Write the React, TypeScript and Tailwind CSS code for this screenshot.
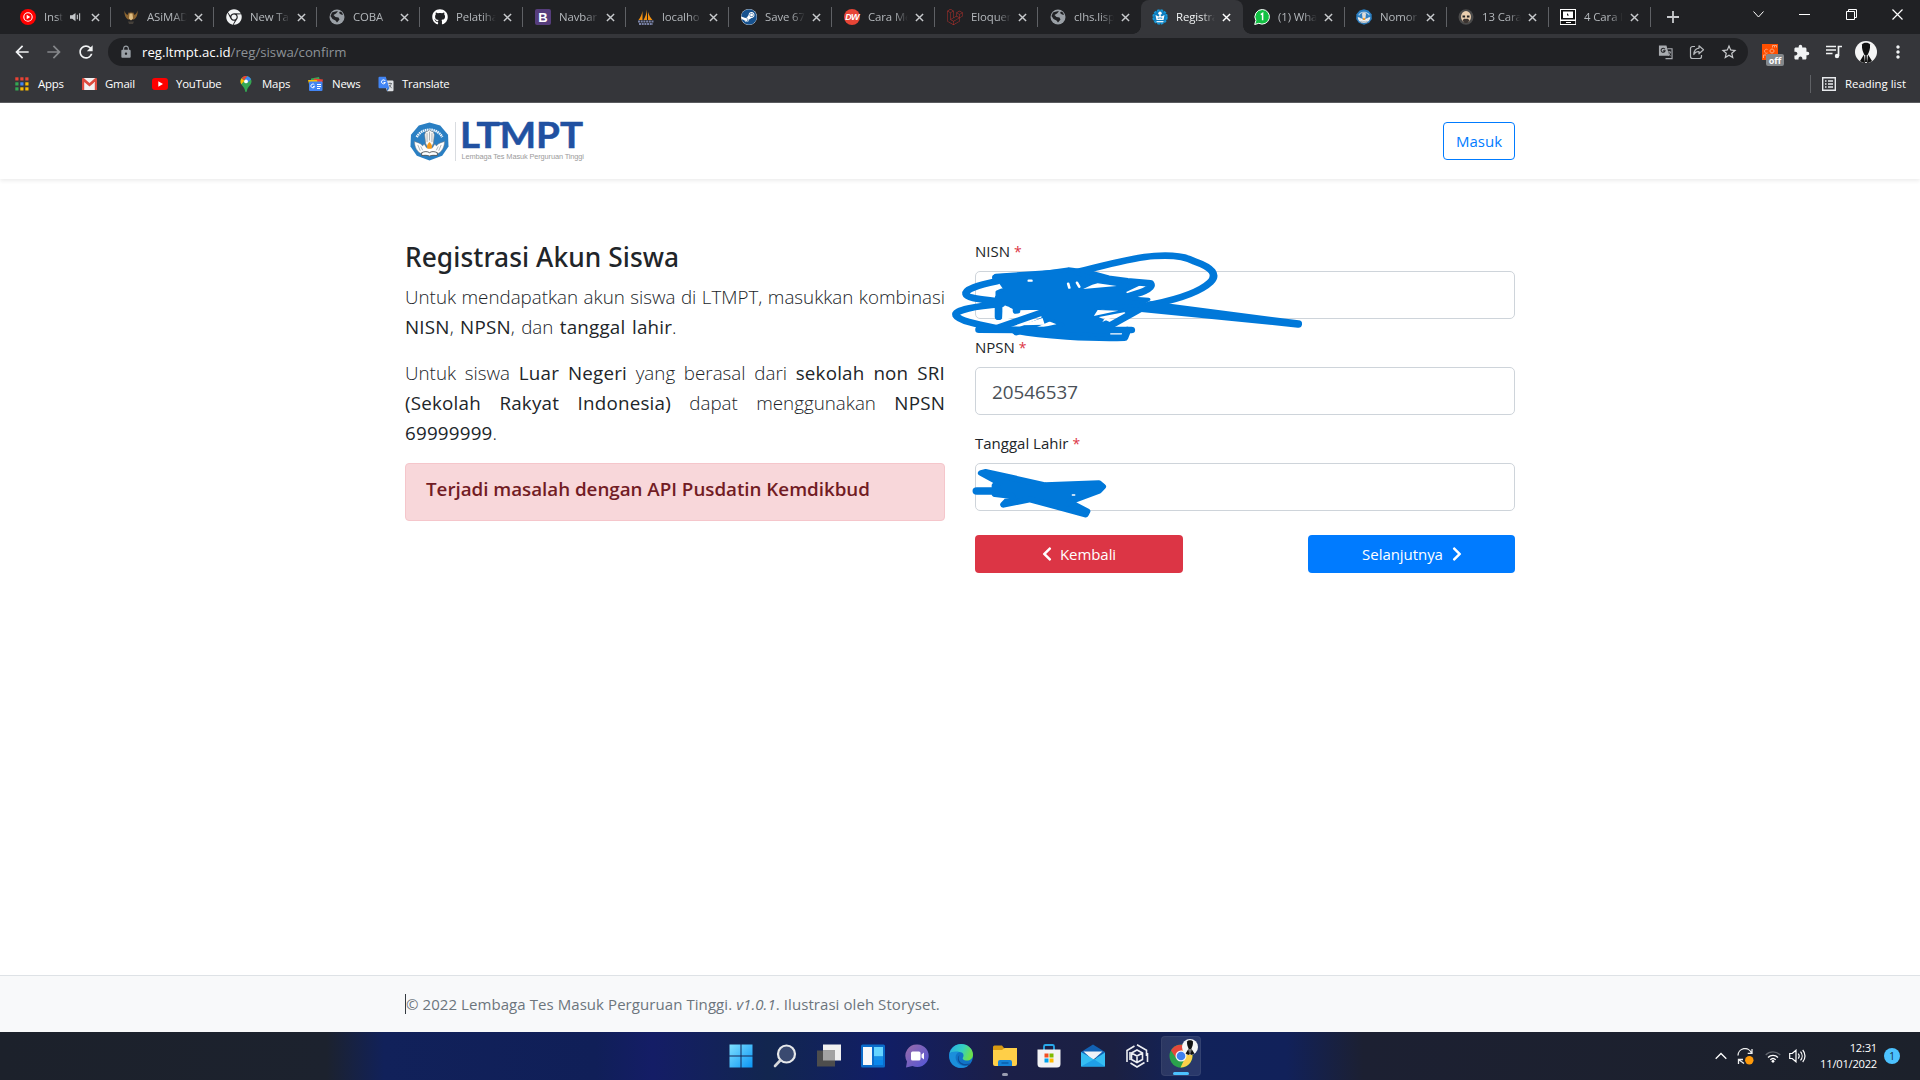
import React from "react";
import { FaChevronLeft, FaChevronRight, FaGithub, FaSteam, FaLaravel, FaChrome } from "react-icons/fa";
import { MdArrowBack, MdArrowForward, MdRefresh, MdLock, MdExtension, MdMoreVert, MdStarBorder } from "react-icons/md";

const BLUE = "#0078d9";

/* ---------- favicons ---------- */

const YtMusic = () => (
  <svg viewBox="0 0 16 16" className="size-4">
    <circle cx="8" cy="8" r="8" fill="#f00" />
    <circle cx="8" cy="8" r="4.2" fill="none" stroke="#fff" strokeWidth="1.1" />
    <path d="M6.7 5.8 10.3 8l-3.6 2.2z" fill="#fff" />
  </svg>
);

const Garuda = () => (
  <svg viewBox="0 0 16 16" className="size-4">
    <path d="M1.500 1.500c.500 2 1.500 3.500 3 4.500L6 3l1 1.500L8 2.500l1 2L10 3l1.500 3c1.500-1 2.500-2.500 3-4.500.500 4-1 7.500-3.500 9H5C2.500 9 1 5.500 1.500 1.500z" fill="#8a6330" />
    <path d="M6.500 4.500h3l.500 5-2 2-2-2z" fill="#e0bd80" />
    <path d="M5 12.500h6l-1 2.500H6z" fill="#45403a" />
  </svg>
);

const Globe = () => (
  <svg viewBox="0 0 16 16" className="size-4">
    <circle cx="8" cy="8" r="7.500" fill="#9aa0a6" />
    <path d="M3 3.500C5 2.500 7 1.800 9 2.300L7 4.500 4.500 6l2 2 3 .500 1 2-2.500 3-1.500-2-3-1.500L1.500 7zM10 4l2 1.500 2 .5-1-2.500L11 2.500z" fill="#202124" />
  </svg>
);

const ChromeGrey = () => <FaChrome className="size-4 text-[#f1f3f4]" />;
const GithubMark = () => <FaGithub className="size-4 text-white" />;

const Bootstrap = () => (
  <span className="flex size-4 items-center justify-center rounded-[2px] bg-[#563d7c] font-['Liberation_Sans'] text-[13px] leading-none font-bold text-white">B</span>
);

const PhpMyAdmin = () => (
  <svg viewBox="0 0 16 16" className="size-4">
    <path d="M4.500 2v9H.500C2.500 8.500 4 5 4.500 2zM9 .500V11H5.500C7.500 8 8.500 4 9 .500zM10 3c1 3 2.500 6 4.500 8H10z" fill="#f29111" />
    <path d="M0 12.500h16M1 15h14" stroke="#7a83a8" strokeWidth="1.800" strokeDasharray="2 .7" />
  </svg>
);

const Steam = () => (
  <span className="flex size-4 items-center justify-center rounded-full bg-white">
    <FaSteam className="size-4 text-[#17528f]" />
  </span>
);

const Dw = () => (
  <span className="flex size-4 items-center justify-center rounded-full bg-[#e74536] font-['Liberation_Sans'] text-[9px] leading-none font-bold tracking-[-0.8px] text-white italic">DW</span>
);

const Laravel = () => <FaLaravel className="size-4 text-[#b5302b]" />;

const TutWuri = ({ className = "size-4" }: { className?: string }) => (
  <svg viewBox="0 0 40 40" className={className}>
    <path d="M20 .500 31 3.500l8 9.500.500 12-6.500 9.500L20 39.500 7 34.500.500 25 1 13 9 3.500z" fill="#2a7fc3" />
    <path d="M7 15.500A14 12 0 0 1 33 15.500" fill="none" stroke="#eef5fb" strokeWidth="2.600" strokeDasharray="1.600 .6" />
    <path d="M4.500 20c3 1 6 1.500 8.500 4.500l1.500-2 2.500 4h6l2.500-4 1.500 2c2.500-3 5.500-3.500 8.500-4.500-.200 5-2 9.500-6 12H10.500c-4-2.500-5.800-7-6-12z" fill="#fff" stroke="#70757a" strokeWidth=".5" />
    <path d="M15 13l1-3 2-.5 2-1.500 2 1.500 2 .500 1 3-1 9-2 4h-4l-2-4z" fill="#f6f6f4" stroke="#70757a" strokeWidth=".6" />
    <path d="M17.500 11.500v9M20 10v9M22.500 11.500v9M11 25l2 4M29 25l-2 4M8 23.500l2.500 6M32 23.500l-2.500 6" stroke="#8f959a" strokeWidth=".7" />
    <path d="M20 20.500c3 3 3 5 2 7h-4c-1-2-1-4 2-7z" fill="#f59a1b" />
    <path d="M12 31.500c3-1.500 6-1.500 8 0 2-1.500 5-1.500 8 0v3c-3-.500-6-.500-8 .5-2-1-5-1-8-.5z" fill="#fff" stroke="#4c5054" strokeWidth=".9" />
  </svg>
);

const LtmptIcon = () => (
  <svg viewBox="0 0 16 16" className="size-4">
    <circle cx="8" cy="8" r="6.800" fill="#0e7dbf" stroke="#1596d6" strokeWidth="1.800" strokeDasharray="2.600 1" />
    <circle cx="8" cy="4.200" r="1.700" fill="#fff" />
    <path d="M3.500 6l3 1.500L8 5.500l1.500 2 3-1.500-1 5h-7z" fill="#fff" />
    <path d="M4.500 12.700h7" stroke="#fff" strokeWidth="1.200" />
    <path d="M6.300 8.500v1.500M9.700 8.500v1.500M8 8v2" stroke="#0e7dbf" strokeWidth=".8" />
  </svg>
);

const WhatsApp = () => (
  <svg viewBox="0 0 16 16" className="size-4">
    <path d="M8.300.5a7.300 7.300 0 1 1-3.500 13.800L.700 15.500 1.900 11.500A7.300 7.300 0 0 1 8.300.5z" fill="#12c143" stroke="#fff" strokeWidth="1" />
    <path d="M6.800 5.700 8.600 4.500V11.300" fill="none" stroke="#fff" strokeWidth="1.500" />
  </svg>
);

const Face = () => (
  <svg viewBox="0 0 16 16" className="size-4">
    <ellipse cx="8" cy="8" rx="7.500" ry="7.800" fill="#4a4a4a" />
    <ellipse cx="8" cy="7.800" rx="5" ry="5.800" fill="#ecd0b0" />
    <path d="M4.500 7.500h2.600M8.900 7.500h2.600" stroke="#222" strokeWidth="1.800" />
    <path d="M4.500 11.500c1-2 2.500-2 3.500-1.500 1-.500 2.500-.500 3.500 1.500l-2 2.500h-3z" fill="#3a3330" />
  </svg>
);

const Computer = () => (
  <svg viewBox="0 0 16 16" className="size-4">
    <path d="M0 0h16v16H0z" fill="#fff" />
    <path d="M1 1h14v9.500H1z" fill="#111" />
    <path d="M3 2.500h10v6.500H3z" fill="#fff" />
    <path d="M7 4v2.500h2z" fill="#111" />
    <path d="M.700 12h14.600v3H.700z" fill="#111" />
    <path d="M6 13h5v1H6z" fill="#fff" />
  </svg>
);

type TabData = { icon: () => React.ReactElement; title: string; audio?: boolean };

const tabsBefore: TabData[] = [
  { icon: YtMusic, title: "Insta", audio: true },
  { icon: Garuda, title: "ASiMAD" },
  { icon: ChromeGrey, title: "New Tab" },
  { icon: Globe, title: "COBA" },
  { icon: GithubMark, title: "Pelatiha" },
  { icon: Bootstrap, title: "Navbar" },
  { icon: PhpMyAdmin, title: "localho" },
  { icon: Steam, title: "Save 67" },
  { icon: Dw, title: "Cara Me" },
  { icon: Laravel, title: "Eloquen" },
  { icon: Globe, title: "clhs.lisp" },
];
const tabsAfter: TabData[] = [
  { icon: WhatsApp, title: "(1) Wha" },
  { icon: () => <TutWuri />, title: "Nomor" },
  { icon: Face, title: "13 Cara" },
  { icon: Computer, title: "4 Cara l" },
];

const Cross = ({ className }: { className: string }) => (
  <svg viewBox="0 0 10 10" className={className}>
    <path d="M1 1l8 8M9 1 1 9" stroke="currentColor" strokeWidth="1.600" />
  </svg>
);

function Tab({ icon: Icon, title, audio, active, sep = true, narrow }: TabData & { active?: boolean; sep?: boolean; narrow?: boolean }) {
  return (
    <div className={`relative flex h-[34px] shrink-0 items-center ${narrow ? "w-[102px] pl-[11px]" : "w-[103px] pl-3"} ${active ? "rounded-t-lg bg-[#35363a] text-[#f1f3f4]" : "text-[#b4b8bc]"}`}>
      {active && (
        <>
          <span className="absolute bottom-0 -left-2 size-2 bg-[radial-gradient(circle_at_0_0,#202124_7.5px,#35363a_8px)]" />
          <span className="absolute -right-2 bottom-0 size-2 bg-[radial-gradient(circle_at_100%_0,#202124_7.5px,#35363a_8px)]" />
        </>
      )}
      <span className="flex size-4 shrink-0 items-center justify-center"><Icon /></span>
      <span className={`ml-2 overflow-hidden text-[11.4px] tracking-[-0.1px] whitespace-nowrap ${audio ? "w-[19px]" : narrow ? "w-[39px]" : "w-[40px]"} [mask-image:linear-gradient(to_right,#000_65%,transparent)]`}>{title}</span>
      {audio && (
        <svg viewBox="0 0 12 10" className="mr-[10px] ml-[7px] h-[10px] w-[11px] shrink-0">
          <path d="M0 3h2.500L6 .5v9L2.500 7H0z" fill="#c4c7ca" />
          <path d="M8 2.500v5M10.500 1v8" stroke="#c4c7ca" strokeWidth="1.200" />
        </svg>
      )}
      <Cross className={`size-[9px] shrink-0 ${audio ? "ml-0" : "ml-[7px]"} ${active ? "text-white" : "text-[#c8cacd]"}`} />
      {sep && <span className="absolute top-[7px] right-0 h-5 w-px bg-[#5f6165]" />}
    </div>
  );
}

/* ---------- browser chrome ---------- */

const GTranslateMono = () => (
  <svg viewBox="0 0 16 16" className="h-4 w-[15px] text-[#a8abaf]">
    <path d="M1 1h8l3 11H1z" fill="currentColor" />
    <path d="M10 4.500h5v10.500H8" fill="none" stroke="currentColor" strokeWidth="1.200" />
    <path d="M7.400 5A2.200 2.200 0 1 0 7.600 6.800H5.500" fill="none" stroke="#202124" strokeWidth="1.100" />
    <path d="M10.500 8h3.500M12 7v1M13.300 8c-.5 2-1.500 3-2.500 4M11 9.500l2.500 3" fill="none" stroke="currentColor" strokeWidth=".9" />
  </svg>
);

const GoogleTranslate = () => (
  <svg viewBox="0 0 16 16" className="size-4">
    <path d="M6 4.500h8.500a1 1 0 0 1 1 1V14a1.200 1.200 0 0 1-1.200 1.300H9z" fill="#dfe1e4" />
    <path d="M1.500.700h6.300l3.500 11.500H1.500A1 1 0 0 1 .500 11.200V1.700a1 1 0 0 1 1-1z" fill="#4285f4" />
    <path d="M7.300 5A2 2 0 1 0 7.400 6.500H5.600" fill="none" stroke="#fff" strokeWidth="1" />
    <path d="M9 12.200h2.300L9 15.300z" fill="#1967d2" />
    <path d="M10.500 7.500H14M12 6.500v1M13.300 7.500c-.5 2-1.300 3-2 3.800M11.200 9l2.500 3.200" fill="none" stroke="#6b7075" strokeWidth=".9" />
  </svg>
);

const AppsIcon = () => (
  <svg viewBox="0 0 14 14" className="size-[14px]">
    {["#ea4335", "#ea4335", "#ea4335", "#34a853", "#4285f4", "#fbbc04", "#34a853", "#fbbc04", "#fbbc04"].map((c, i) => (
      <rect key={i} x={(i % 3) * 5 + 0.300} y={Math.floor(i / 3) * 5 + 0.300} width="3.200" height="3.200" fill={c} />
    ))}
  </svg>
);
const Gmail = () => (
  <svg viewBox="0 0 15 12" className="h-3 w-[15px]">
    <path d="M1 0h13v12H1z" fill="#f2f2f2" />
    <path d="M0 1.200A1.200 1.200 0 0 1 2 .300L7.500 5 13 .300a1.200 1.200 0 0 1 2 .9V12h-2.200V4L7.500 8.500 2.200 4v8H0z" fill="#dd4b3e" />
  </svg>
);
const YouTube = () => (
  <svg viewBox="0 0 16 12" className="h-3 w-4">
    <rect width="16" height="12" rx="3" fill="#f00" />
    <path d="M6.300 3.300 11 6 6.300 8.700z" fill="#fff" />
  </svg>
);
const Maps = () => (
  <svg viewBox="0 0 12 16" className="h-4 w-3">
    <path d="M6 0C2.700 0 .500 2.500.500 5.500c0 4 4 5 4.500 9 .1.900.4 1.500 1 1.500s.900-.600 1-1.500c.500-4 4.500-5 4.500-9C11.500 2.500 9.300 0 6 0z" fill="#34a853" />
    <path d="M1.500 2.200 4.500 4.700 1.200 8.300C.200 6 .300 4 1.500 2.200z" fill="#fbbc04" />
    <path d="M1.800 1.900C3.300.100 5.500-.300 7.300.200L4 4.200z" fill="#ea4335" />
    <path d="M7.300.200c1.800.500 3 1.600 3.700 3L8 6.500 5 3z" fill="#4285f4" />
    <circle cx="6" cy="5.400" r="1.900" fill="#fff" />
  </svg>
);
const News = () => (
  <svg viewBox="0 0 16 14" className="h-[14px] w-4">
    <path d="M3 1.500 11 0l1 4H3z" fill="#34a853" />
    <path d="M6 1.500 15 2.500 14 7H5z" fill="#ea4335" />
    <path d="M0 3h9l1 4H1z" fill="#fbbc04" />
    <rect x="1" y="4.500" width="13.500" height="9.500" rx="1" fill="#4285f4" />
    <path d="M6.500 8A1.900 1.900 0 1 0 6.600 9.600H5M9 7.500h4M9 9.500h4M9 11.500h3" fill="none" stroke="#fff" strokeWidth="1" />
  </svg>
);

const bookmarks = [
  { icon: AppsIcon, label: "Apps", w: "w-[67px]" },
  { icon: Gmail, label: "Gmail", w: "w-[71px]" },
  { icon: YouTube, label: "YouTube", w: "w-[86px]" },
  { icon: Maps, label: "Maps", w: "w-[70px]" },
  { icon: News, label: "News", w: "w-[70px]" },
  { icon: GoogleTranslate, label: "Translate", w: "w-[90px]" },
];

const Suit = ({ className }: { className: string }) => (
  <svg viewBox="0 0 22 22" className={className}>
    <circle cx="11" cy="11" r="11" fill="#f5f5f5" />
    <path d="M7 3.500C8 1 14 1 15 3.500c.500 4-1 8-2.500 10.500h-3C8 11.500 6.500 7.500 7 3.500z" fill="#111" />
    <path d="M5 20l4-6.500L10 22C8 21.800 6.500 21.200 5 20zM17 20l-4-6.500L12 22c2-.200 3.500-.800 5-2zM10.300 14h1.400l.300 7h-2z" fill="#111" />
  </svg>
);

function BrowserChrome() {
  return (
    <header className="h-[103px] shrink-0 border-b border-[#5b5c60] bg-[#35363a] font-['Open_Sans',sans-serif]">
      <div className="flex h-[34px] bg-[#202124] pl-2">
        {tabsBefore.map((t, i) => <Tab key={i} {...t} sep={i < 10} />)}
        <Tab icon={LtmptIcon} title="Registra" active sep={false} narrow />
        {tabsAfter.map((t, i) => <Tab key={i} {...t} narrow />)}
        <svg viewBox="0 0 12 12" className="mt-[11px] ml-4 size-3"><path d="M6 0v12M0 6h12" stroke="#c8cacd" strokeWidth="1.800" /></svg>
        <div className="ml-auto flex items-start pt-[9px] text-white">
          <svg viewBox="0 0 11 11" className="mr-[35px] size-[11px]"><path d="M.5 2.500 5.500 8l5-5.500" fill="none" stroke="currentColor" /></svg>
          <svg viewBox="0 0 11 11" className="mr-[36px] size-[11px]"><path d="M0 5.500h11" stroke="currentColor" /></svg>
          <svg viewBox="0 0 11 11" className="mr-[35px] size-[11px]"><path d="M.5 2.500h8v8h-8zM2.500 2.500v-2h8v8h-2" fill="none" stroke="currentColor" /></svg>
          <svg viewBox="0 0 11 11" className="mr-[17px] size-[11px]"><path d="M.5.5l10 10M10.500.5l-10 10" stroke="currentColor" strokeWidth="1.200" /></svg>
        </div>
      </div>
      <div className="flex h-9 items-center pl-3">
        <MdArrowBack className="size-5 text-[#f1f3f4]" />
        <MdArrowForward className="ml-[12px] size-5 text-[#85878a]" />
        <MdRefresh className="ml-[12px] size-5 text-[#f1f3f4]" />
        <div className="ml-[12px] flex h-7 w-[1640px] items-center rounded-full bg-[#202124] pl-[11px]">
          <MdLock className="size-[14px] text-[#9aa0a6]" />
          <p className="mt-px ml-[9px] text-[13.2px] tracking-[0.010px] text-[#8d9297]"><span className="text-white">reg.ltmpt.ac.id</span>/reg/siswa/confirm</p>
          <div className="ml-auto flex items-center pr-[10px] text-[#b5b8bb]">
            <GTranslateMono />
            <svg viewBox="0 0 16 16" className="ml-[16px] size-4">
              <path d="M6 2.500H3.500a2 2 0 0 0-2 2v8a2 2 0 0 0 2 2h7a2 2 0 0 0 2-2V11" fill="none" stroke="currentColor" strokeWidth="1.200" />
              <path d="M10 1.800 14.500 5.800 10 9.800V7.500C7.500 7.400 6 8.300 4.800 10.500 5 7 7 4.400 10 4.100z" fill="none" stroke="currentColor" strokeWidth="1.200" strokeLinejoin="round" />
            </svg>
            <MdStarBorder className="ml-[15px] size-[18px] text-[#c8cacd]" />
          </div>
        </div>
        <div className="relative ml-[14px] size-4 bg-[#ff4f00]">
          <svg viewBox="0 0 16 16" className="size-4" fill="none" stroke="#f9a780" strokeWidth="1">
            <path d="M5.500 5.500a2 2 0 1 0 0 3.500M10 5a2 2 0 1 0 .010 0M10.500 3.500v-2h2v2M12.500 1.500h2v2M1.500 14v-3h2.500" />
          </svg>
          <span className="absolute top-[10px] left-[4px] flex h-3 w-[18px] items-center justify-center rounded-[2px] bg-[#84888b] text-[9px] leading-none font-bold text-white">off</span>
        </div>
        <MdExtension className="ml-[15px] size-[17px] text-[#f1f3f4]" />
        <svg viewBox="0 0 16 14" className="ml-4 h-[14px] w-4 text-[#f1f3f4]">
          <path d="M0 1.500h10M0 5h10M0 8.500h6.500M12.500 11V1.500H16" fill="none" stroke="currentColor" strokeWidth="1.700" />
          <circle cx="11" cy="11" r="2.200" fill="currentColor" />
        </svg>
        <Suit className="ml-[13px] size-[22px]" />
        <MdMoreVert className="ml-[11px] size-5 text-[#f1f3f4]" />
      </div>
      <div className="flex h-7 items-center pl-[14px] text-[11.4px] text-white">
        {bookmarks.map(({ icon: Icon, label, w }) => (
          <div key={label} className={`flex items-center ${w}`}>
            <span className="flex w-4 shrink-0 items-center justify-center"><Icon /></span>
            <span className="ml-2 tracking-[-0.200px]">{label}</span>
          </div>
        ))}
        <div className="ml-auto flex items-center border-l border-[#5f6165]">
          <svg viewBox="0 0 14 14" className="my-px ml-[11px] size-[14px]">
            <path d="M.7.7h12.600v12.600H.7z" fill="none" stroke="#e8eaed" strokeWidth="1.400" />
            <path d="M3 4h1.500M6 4h5M3 7h1.500M6 7h5M3 10h1.500M6 10h5" stroke="#e8eaed" strokeWidth="1.400" />
          </svg>
          <span className="mr-[14px] ml-[9px]">Reading list</span>
        </div>
      </div>
    </header>
  );
}

/* ---------- page ---------- */

function Logo() {
  return (
    <div className="flex items-center pl-[5px]">
      <TutWuri className="h-[39px] w-[39px]" />
      <span className="ml-[6px] h-[39px] w-px bg-[#d9dce0]" />
      <svg viewBox="0 0 124 40" className="ml-[5px] h-10 w-[124px]">
        <text x="-1" y="27.300" textLength="123" lengthAdjust="spacingAndGlyphs" fontFamily="Lato" fontWeight="700" fontSize="36" fill="#2151a1" stroke="#2151a1" strokeWidth=".5">LTMPT</text>
        <path d="M16 1.300h8v3h-8zM36 1.300h10v3H36z" fill="#2151a1" />
        <text x="0.500" y="38" textLength="122.500" fontFamily="Liberation Sans" fontSize="7.400" fill="#9b9b9b">Lembaga Tes Masuk Perguruan Tinggi</text>
      </svg>
    </div>
  );
}

const Label = ({ children }: { children: string }) => (
  <label className="flex h-6 items-center text-[15px] text-[#212529]">
    {children}<span className="ml-1 text-[14px] text-[#dc3545]">*</span>
  </label>
);

const Field = ({ label, value }: { label: string; value?: string }) => (
  <div className="mb-4 flex flex-col">
    <Label>{label}</Label>
    <div className="mt-2 flex h-12 items-center rounded-[5px] border border-[#ced4da] px-4 pt-[3px] text-[18.8px] text-[#495057]">{value}</div>
  </div>
);

function Scribbles() {
  return (
    <>
      <svg viewBox="0 0 1568 540" preserveAspectRatio="none" className="pointer-events-none absolute -top-[9px] -left-[35px] h-[180px] w-[600px]" fill="none" stroke={BLUE} strokeWidth="20" strokeLinecap="round" strokeLinejoin="round">
        <path d="M350 128C430 108 500 82 560 78Q630 72 665 94Q735 122 707 156Q670 196 560 222L490 240" />
        <path d="M148 154C100 166 65 178 68 192S115 208 150 214" />
        <path d="M160 222C95 228 35 240 42 256S100 284 145 294" />
        <path d="M520 235 936 283M550 224 936 281" />
        <path d="M146 143 250 136 335 122 390 130 440 146 490 154 550 160C560 178 520 190 470 206" />
        <path d="M153 205V260M200 225V242M270 246 140 298M290 262 200 306M530 232 440 290M410 252 520 228" />
        <path d="M102 299 280 300 500 300M190 300C260 318 400 326 482 323L490 300" />
        <path d="M146 136 330 122 390 140 480 154 520 162 480 184 490 204 545 208 520 226 410 236 405 262 440 280 440 316 230 306 320 284 270 262 270 234 200 236 150 210 150 186 170 176z" fill={BLUE} strokeWidth="10" />
        <path d="M335 161l3 12M358 158l6 12M232 152h7" stroke="#fff" strokeWidth="7" />
        <path d="M412 160l50 8-88 9 24-13zM412 240l54 2-64 16zM432 264l38-12-46 24zM166 230h14l12 22 46-6-76 26zM210 286l58-22 6 20z" fill="#fff" stroke="none" />
      </svg>
      <svg viewBox="0 0 1568 570" preserveAspectRatio="none" className="pointer-events-none absolute top-[161px] -left-[35px] h-[190px] w-[600px]" fill={BLUE} stroke={BLUE} strokeWidth="18" strokeLinecap="round" strokeLinejoin="round">
        <path d="M108 219 118 216 190 234 275 256 415 250 425 260 415 272 350 300 340 308 384 334 380 343 235 298 166 314 188 288 144 282 144 256 155 248z" />
        <path d="M96 273H150M410 260H420" strokeWidth="22" />
        <path d="M346 285h6" stroke="#fff" strokeWidth="4" />
      </svg>
    </>
  );
}

const Strong = ({ children }: { children: React.ReactNode }) => <span className="font-normal tracking-[0.200px]">{children}</span>;

function Page() {
  return (
    <div className="flex min-h-0 flex-1 flex-col bg-white font-['Open_Sans',sans-serif] text-[#212529]">
      <nav className="h-[76px] shrink-0 shadow-[0_2px_4px_rgba(0,0,0,0.075)]">
        <div className="mx-auto flex h-full w-[1110px] items-center justify-between">
          <Logo />
          <button className="h-[38px] w-[72px] rounded border border-[#007bff] text-[15px] text-[#007bff]">Masuk</button>
        </div>
      </nav>
      <main className="mx-auto grid w-[1110px] flex-1 grid-cols-2 content-start gap-[30px] pt-[60px]">
        <section>
          <h1 className="mb-[9px] flex h-[34px] items-center pt-1 font-['Noto_Sans','Open_Sans',sans-serif] text-[26.300px] font-medium tracking-[0.070px] whitespace-nowrap">Registrasi Akun Siswa</h1>
          <div className="text-justify text-[18.800px] leading-[30px] font-light">
            <p className="mb-4">Untuk mendapatkan akun siswa di LTMPT, masukkan kombinasi <span className="[word-spacing:1.5px]"><Strong>NISN</Strong>, <Strong>NPSN</Strong>, dan <Strong>tanggal lahir</Strong>.</span></p>
            <p>Untuk siswa <Strong>Luar Negeri</Strong> yang berasal dari <Strong>sekolah non SRI (Sekolah Rakyat Indonesia)</Strong> dapat menggunakan <Strong>NPSN 69999999</Strong>.</p>
          </div>
          <div className="mt-[15px] h-[58px] rounded border border-[#f5c6cb] bg-[#f8d7da] px-5 pt-[13px]">
            <p className="text-[18.800px] leading-6 font-semibold tracking-[-0.020px] whitespace-nowrap text-[#721c24]">Terjadi masalah dengan API Pusdatin Kemdikbud</p>
          </div>
        </section>
        <section className="relative">
          <Field label="NISN" />
          <Field label="NPSN" value="20546537" />
          <Field label="Tanggal Lahir" />
          <div className="mt-6 flex justify-between text-[15px] tracking-[-0.050px] text-white">
            <button className="flex h-[38px] w-[208px] items-center justify-center gap-[5px] rounded bg-[#dc3545] pr-[3px]"><FaChevronLeft className="size-4" />Kembali</button>
            <button className="flex h-[38px] w-[207px] items-center justify-center gap-[6px] rounded bg-[#007bff] pl-[4px]">Selanjutnya<FaChevronRight className="size-4" /></button>
          </div>
          <Scribbles />
        </section>
      </main>
      <footer className="h-[57px] shrink-0 border-t border-[#dee2e6] bg-[#f8f9fa]">
        <div className="mx-auto flex h-full w-[1110px] items-center">
          <p className="flex h-5 items-center border-l border-[#343a40] text-[15px] tracking-[0.070px] text-[#6c757d]"><span>© 2022 Lembaga Tes Masuk Perguruan Tinggi. <em>v1.0.1</em>. Ilustrasi oleh Storyset.</span></p>
        </div>
      </footer>
    </div>
  );
}

/* ---------- taskbar ---------- */

const icons = [
  <svg viewBox="0 0 24 24"><defs><linearGradient id="win" x1="0" y1="0" x2="1" y2="1"><stop stopColor="#7fe0ff" /><stop offset="1" stopColor="#0a95f5" /></linearGradient></defs><path d="M.5.5h11v11H.5zM12.500.5h11v11h-11zM.5 12.500h11v11H.5zM12.500 12.500h11v11h-11z" fill="url(#win)" /></svg>,
  <svg viewBox="0 0 24 24"><circle cx="13.500" cy="10" r="8.500" fill="#3a4a70" stroke="#e6e8ea" strokeWidth="2.200" /><path d="M7.200 16.500 2 22" stroke="#d5d7da" strokeWidth="2.600" strokeLinecap="round" /></svg>,
  <svg viewBox="0 0 24 24"><path d="M6 .5h18v16H6z" fill="#f0f0f0" /><path d="M0 6.500h18v16H0z" fill="#4d4d4d" /><path d="M6 6.500h12v10H6z" fill="#a2a2a2" /></svg>,
  <svg viewBox="0 0 24 24"><rect y=".5" width="24" height="23" rx="1.500" fill="#0a6ccb" /><path d="M2 3h9v18H2z" fill="#f5f7fa" /><path d="M13 3h9v9.500h-9z" fill="#66d4ff" /><path d="M13 12.500h9V16h-9z" fill="#1590e8" /><path d="M13 16h9v5h-9z" fill="#0a86ea" /></svg>,
  <svg viewBox="0 0 24 24"><defs><linearGradient id="chat" x1="0" y1="0" x2="1" y2="1"><stop stopColor="#9b6ca8" /><stop offset="1" stopColor="#4f55d8" /></linearGradient></defs><path d="M12.500.5a11.300 11.300 0 1 1-5 21.500L1 23.500l1-6A11.300 11.300 0 0 1 12.500.5z" fill="url(#chat)" /><rect x="6" y="7.500" width="9.500" height="9" rx="1.500" fill="#fff" /><path d="M16.500 10.500 19 8.500v7l-2.500-2z" fill="#fff" /></svg>,
  <svg viewBox="0 0 24 24"><defs><linearGradient id="e1" x1="0" y1="0" x2="1" y2=".3"><stop stopColor="#27a9e8" /><stop offset=".6" stopColor="#35d0c0" /><stop offset="1" stopColor="#6cdf4d" /></linearGradient></defs><circle cx="12" cy="12" r="12" fill="#1173c7" /><path d="M.3 10C1.500 4 6.500 0 12 0c7 0 12 5 12 10.500 0 4-3 6-6 6-3.500 0-5-1.500-4-3 1.500-2.500 0-5.500-3.500-5.500C6 8 1.500 8 .3 10z" fill="url(#e1)" /><path d="M10.500 8C7 9 5.500 13 7.500 17c2 4.500 7 6 11.500 4.700C16 24.500 8 25 3.500 20.500.500 17 0 13 .300 10 1.500 8 6 7 10.500 8z" fill="#1b8fdb" /><path d="M10.500 11c-3 6 3 11.500 11.500 8-2 1.800-4 2.700-6 2.500-7-.500-9-7.500-5.500-10.500z" fill="#0d4f98" /></svg>,
  <svg viewBox="0 0 24 24"><path d="M0 3a1.500 1.500 0 0 1 1.500-1.500H9L11 4v5H0z" fill="#d99a12" /><path d="M0 6h9l2.500-2H24v16a2 2 0 0 1-2 2H2a2 2 0 0 1-2-2z" fill="#ffcf48" /><path d="M5 22v-4a2 2 0 0 1 2-2h10a2 2 0 0 1 2 2v4z" fill="#1583d8" /><path d="M8.500 19h7" stroke="#0b5ca8" strokeWidth="1.400" /></svg>,
  <svg viewBox="0 0 24 24"><path d="M7 7V2.500A1.500 1.500 0 0 1 8.500 1h7A1.500 1.500 0 0 1 17 2.500V7" fill="none" stroke="#29a9ea" strokeWidth="1.800" /><path d="M.5 5.500h23V20a3.500 3.500 0 0 1-3.500 3.500H4A3.500 3.500 0 0 1 .5 20z" fill="#f3f3f5" /><path d="M7.500 9.500h4v4h-4z" fill="#f25022" /><path d="M12.500 9.500h4v4h-4z" fill="#7fba00" /><path d="M7.500 14.500h4v4h-4z" fill="#00a4ef" /><path d="M12.500 14.500h4v4h-4z" fill="#ffb900" /></svg>,
  <svg viewBox="0 0 24 24"><path d="M0 8 12 .500 24 8v6H0z" fill="#1261b3" /><path d="M2.500 7.500h19L12 16z" fill="#f0f3f7" /><path d="M0 8l13 7.500L24 8.500v14H0z" fill="#35bdf2" /><path d="M13 15.300 0 22.500h24z" fill="#1f9fe6" /></svg>,
  <svg viewBox="0 0 24 24" fill="none" stroke="#eceef2" strokeWidth="1.600"><path d="M2 18V6.500L9.500 2M12 .800l9.500 5.500V12M22.500 9v9M19.500 18.500 12 23l-6.500-4M5 16V8" /><path d="M12 6l5.500 3v6.500L12 18.500l-5.500-3V9zM6.500 9 12 12l5.500-3M12 12v6.500" /></svg>,
  <svg viewBox="0 0 24 24" overflow="visible"><circle cx="12" cy="12" r="11.500" fill="#2ba24c" /><path d="M2 6.500A11.500 11.500 0 0 1 22 6.500L12 12 7 14z" fill="#e5483b" /><path d="M22 6.500A11.500 11.500 0 0 1 11.500 23.500L16 14 12 6.500z" fill="#fbd04b" /><circle cx="12" cy="12" r="5.500" fill="#f2f4f8" /><circle cx="12" cy="12" r="4.300" fill="#3f7fee" /></svg>,
];

function Taskbar() {
  return (
    <div className="relative flex h-12 shrink-0 justify-center bg-[linear-gradient(90deg,#1c212b_0%,#1c222e_17%,#11215a_20%,#101f58_31%,#141d66_34%,#12264f_40%,#111e66_46%,#1b1f48_52%,#1b2042_58%,#11225a_62%,#11215a_67%,#1c2032_71%,#1c212b_100%)] pl-px font-['Open_Sans',sans-serif]">
      <div className="flex items-center gap-1">
        {icons.map((icon, i) => (
          <div key={i} className={`relative flex size-10 items-center justify-center rounded ${i === 10 ? "border border-white/5 bg-white/10" : ""}`}>
            <span className="block size-6 [&>svg]:size-6">{icon}</span>
            {i === 10 && <Suit className="absolute top-[2px] right-[2px] size-4" />}
            {i === 6 && <span className="absolute bottom-0 h-[3px] w-[6px] rounded-full bg-[#9a9db0]" />}
            {i === 10 && <span className="absolute bottom-0 h-[3px] w-4 rounded-full bg-[#4cc2ff]" />}
          </div>
        ))}
      </div>
      <div className="absolute inset-y-0 right-5 flex items-center text-white">
        <svg viewBox="0 0 12 8" className="h-2 w-3"><path d="M.7 6.700 6 1.500l5.300 5.200" fill="none" stroke="#fff" strokeWidth="1.300" /></svg>
        <svg viewBox="0 0 17 17" className="ml-[10px] size-[17px]">
          <path d="M1 7.500A7 7 0 0 1 14.500 5M15 1v4.300h-4.300M1.500 16v-4.500H6M1.500 11.500 7 15.500" fill="none" stroke="#eee" strokeWidth="1.300" />
          <circle cx="12.300" cy="12.300" r="4.200" fill="#ff9a0a" />
        </svg>
        <svg viewBox="0 0 16 13" className="ml-[11px] h-[13px] w-4" fill="none" strokeWidth="1.300">
          <path d="M.7 5a10.300 10.300 0 0 1 14.600 0" stroke="#60646c" />
          <path d="M3 7.500a7 7 0 0 1 10 0M5.300 9.800a3.900 3.900 0 0 1 5.400 0" stroke="#fff" />
          <circle cx="8" cy="11.300" r="1.400" fill="#fff" />
        </svg>
        <svg viewBox="0 0 17 14" className="ml-2 h-[14px] w-[17px]" fill="none" stroke="#fff" strokeWidth="1.200">
          <path d="M.7 4.500h2.500L7 1.200v11.600L3.200 9.500H.7zM9.200 4.500a4 4 0 0 1 0 5M11.500 2.700a6.500 6.500 0 0 1 0 8.600M13.700 1a9 9 0 0 1 0 12" />
        </svg>
        <div className="ml-[14px] text-right text-[11.200px] leading-4 tracking-[-0.250px]"><p>12:31</p><p>11/01/2022</p></div>
        <span className="ml-[7px] flex size-4 items-center justify-center rounded-full bg-[#4cc2ff] text-[10px] leading-none text-[#14303f]">1</span>
      </div>
    </div>
  );
}

export default function App() {
  return (
    <div className="flex h-[1080px] w-[1920px] flex-col overflow-hidden">
      <BrowserChrome />
      <Page />
      <Taskbar />
    </div>
  );
}
